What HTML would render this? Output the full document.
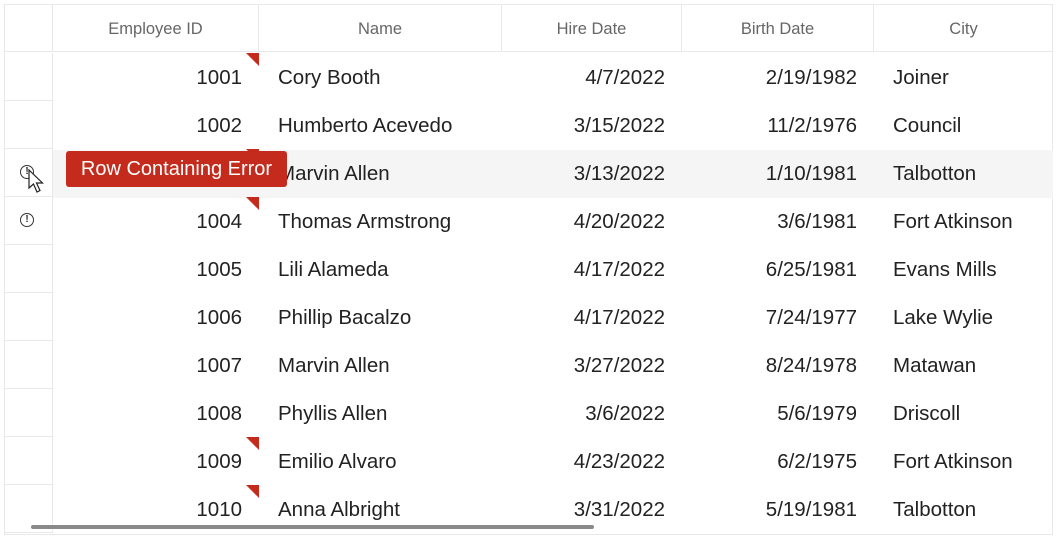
<!DOCTYPE html>
<html><head><style>
body{margin:0;width:1058px;height:541px;background:#fff;font-family:"Liberation Sans",sans-serif;position:relative;overflow:hidden}
.g{position:absolute;left:4px;top:4px;width:1049px;height:531px;border:1px solid #e8e8e8;box-sizing:border-box}
.h{position:absolute;top:5px;height:47px;border-right:1px solid #e8e8e8;border-bottom:1px solid #e8e8e8;box-sizing:border-box;color:#666;font-size:16.5px;line-height:49px;text-align:center}
.ind{position:absolute;left:5px;width:48px;height:48px;border-right:1px solid #e8e8e8;border-bottom:1px solid #e8e8e8;box-sizing:border-box}
.c{position:absolute;font-size:20.5px;color:#222;line-height:50px;white-space:nowrap}
.r{text-align:right}
.tri{position:absolute;left:246px;width:0;height:0;border-top:13px solid #c42b1c;border-left:13px solid transparent}
.ic{position:absolute;left:20px;width:12px;height:12px;border:1.3px solid #333;border-radius:50%;font-size:10px;line-height:12px;text-align:center;font-weight:bold;color:#333}
</style></head><body>
<div class="g"></div>
<div class="h" style="left:5px;width:48px"></div>
<div class="h" style="left:53px;width:206px">Employee ID</div>
<div class="h" style="left:259px;width:243px">Name</div>
<div class="h" style="left:502px;width:180px">Hire Date</div>
<div class="h" style="left:682px;width:192px">Birth Date</div>
<div class="h" style="left:874px;width:179px;border-right:none">City</div>
<div style="position:absolute;left:53px;top:150px;width:1000px;height:48px;background:#f5f5f5"></div>
<div id="rows"></div>
<script>
var d=[["1001","Cory Booth","4/7/2022","2/19/1982","Joiner",1],["1002","Humberto Acevedo","3/15/2022","11/2/1976","Council",0],["1003","Marvin Allen","3/13/2022","1/10/1981","Talbotton",1],["1004","Thomas Armstrong","4/20/2022","3/6/1981","Fort Atkinson",1],["1005","Lili Alameda","4/17/2022","6/25/1981","Evans Mills",0],["1006","Phillip Bacalzo","4/17/2022","7/24/1977","Lake Wylie",0],["1007","Marvin Allen","3/27/2022","8/24/1978","Matawan",0],["1008","Phyllis Allen","3/6/2022","5/6/1979","Driscoll",0],["1009","Emilio Alvaro","4/23/2022","6/2/1975","Fort Atkinson",1],["1010","Anna Albright","3/31/2022","5/19/1981","Talbotton",1]];
var h="";
d.forEach(function(r,i){var t=53+i*48;
h+='<div class="ind" style="top:'+t+'px"></div>';
h+='<div class="c r" style="top:'+t+'px;left:53px;width:189px">'+r[0]+'</div>';
h+='<div class="c" style="top:'+t+'px;left:278px">'+r[1]+'</div>';
h+='<div class="c r" style="top:'+t+'px;left:502px;width:163px">'+r[2]+'</div>';
h+='<div class="c r" style="top:'+t+'px;left:682px;width:175px">'+r[3]+'</div>';
h+='<div class="c" style="top:'+t+'px;left:893px">'+r[4]+'</div>';
if(r[5])h+='<div class="tri" style="top:'+t+'px"></div>';
});
document.getElementById("rows").innerHTML=h;
</script>
<div class="ic" style="top:165px">!</div>
<div class="ic" style="top:213px">!</div>
<svg style="position:absolute;left:28px;top:169px" width="20" height="28" viewBox="0 0 20 28"><path d="M1 1 L1 19 L5.5 15 L9 23 L12 21.5 L8.5 14 L14.5 14 Z" fill="#fff" stroke="#222" stroke-width="1.2"/></svg>
<div style="position:absolute;left:66px;top:151px;width:221px;height:36px;background:#c42b1c;border-radius:3px;color:#fff;font-size:20px;line-height:36px;text-align:center">Row Containing Error</div>
<div style="position:absolute;left:31px;top:525px;width:563px;height:4px;background:#8a8a8a;border-radius:2px"></div>
</body></html>
